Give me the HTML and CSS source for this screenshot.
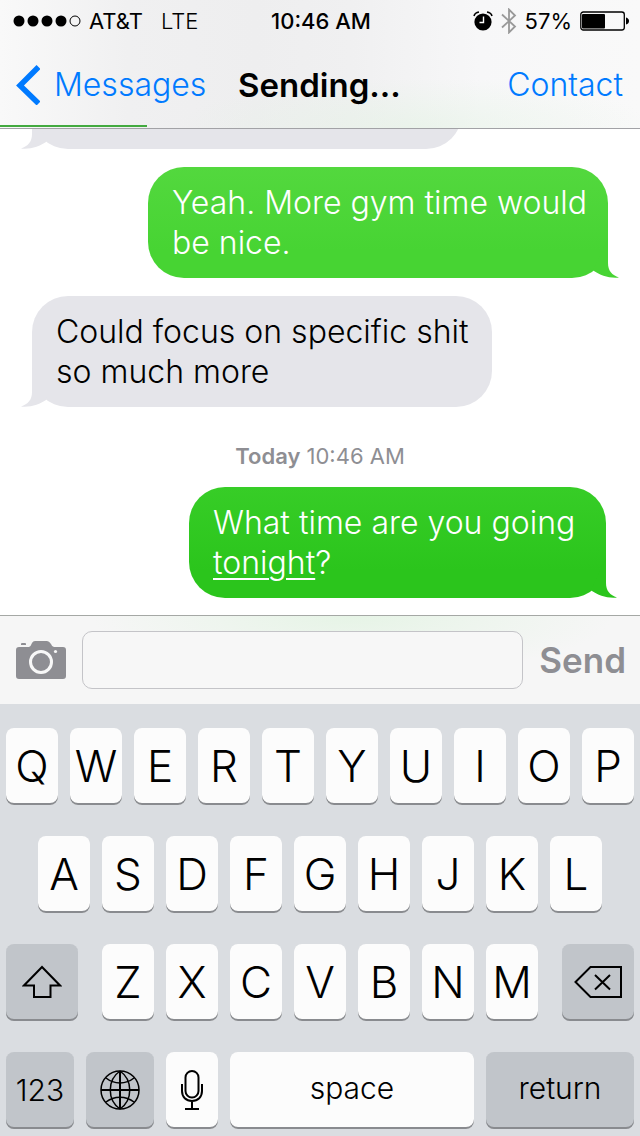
FILE: index.html
```html
<!DOCTYPE html>
<html lang="en">
<head>
    <meta charset="UTF-8">
    <meta name="viewport" content="width=device-width, initial-scale=1.0">
    <title>Messages</title>
    <link rel="stylesheet" href="styles.css">
</head>
<body>
    <header class="header">
        <div class="status">
            <div class="status-left">
                <svg class="signal" width="68" height="12" viewBox="0 0 68 12">
                    <circle cx="6" cy="6" r="5.5"/>
                    <circle cx="20" cy="6" r="5.5"/>
                    <circle cx="34" cy="6" r="5.5"/>
                    <circle cx="48" cy="6" r="5.5"/>
                    <circle cx="62" cy="6" r="5" fill="none" stroke="#000"/>
                </svg>
                <span class="carrier">AT&amp;T</span>
                <span class="network">LTE</span>
            </div>
            <div class="clock">10:46 AM</div>
            <div class="status-right">
                <svg width="20" height="20" viewBox="0 0 20 20">
                    <circle cx="10" cy="11" r="8.6"/>
                    <path d="M1 5 Q2 1.5 6 1M19 5 Q18 1.5 14 1" fill="none" stroke="#000" stroke-width="1.6"/>
                    <path d="M10.5 5.5V11.5H6.5" fill="none" stroke="#fff" stroke-width="1.4"/>
                </svg>
                <svg class="bluetooth" width="16" height="26" viewBox="0 0 16 26">
                    <path d="M1 6.5L14 18.5L8 24.5V1.5L14 7.5L1 19.5" fill="none" stroke="#999" stroke-width="1.8"/>
                </svg>
                <span class="percent">57%</span>
                <svg width="49" height="20" viewBox="0 0 49 20">
                    <rect x=".8" y="1" width="43.5" height="18" rx="2.5" fill="none" stroke="#000" stroke-width="1.3"/>
                    <rect x="2" y="3" width="23" height="14.5" rx="1"/>
                    <path d="M46 6.5Q49 7.5 49 10T46 13.5Z"/>
                </svg>
            </div>
        </div>
        <nav class="nav">
            <a href="#" class="back">
                <svg width="24" height="40" viewBox="0 0 24 40">
                    <path d="M22.500 2L4 20.500L22.500 38.500" fill="none" stroke="#007aff" stroke-width="5.500"/>
                </svg>
                Messages
            </a>
            <h1>Sending...</h1>
            <a href="#" class="contact">Contact</a>
        </nav>
        <progress class="progress" value="23" max="100" aria-label="Sending"></progress>
    </header>

    <main class="chat">
        <div class="bubble received previous">
            <svg class="tail" width="26" height="40" viewBox="0 0 26 40"><path d="M11 0V25C11 33 7 37 0 39.500C10 40.500 19 37 25 33L26 32Z"/></svg>
        </div>
        <div class="bubble sent">
            Yeah. More gym time would be nice.
            <svg class="tail" width="26" height="40" viewBox="0 0 26 40"><path d="M11 0V25C11 33 7 37 0 39.500C10 40.500 19 37 25 33L26 32Z"/></svg>
        </div>
        <div class="bubble received">
            Could focus on specific shit so much more
            <svg class="tail" width="26" height="40" viewBox="0 0 26 40"><path d="M11 0V25C11 33 7 37 0 39.500C10 40.500 19 37 25 33L26 32Z"/></svg>
        </div>
        <div class="date"><b>Today</b> 10:46 AM</div>
        <div class="bubble sent sending">
            What time are you going <u>tonight</u>?
            <svg class="tail" width="26" height="40" viewBox="0 0 26 40"><path d="M11 0V25C11 33 7 37 0 39.500C10 40.500 19 37 25 33L26 32Z"/></svg>
        </div>
    </main>

    <form class="composer">
        <button type="button" class="camera" aria-label="Camera">
            <svg width="50" height="38" viewBox="0 0 50 38">
                <path d="M3 6H13Q15 5 16 2Q17 0 19 0H31Q33 0 35 3Q36 6 38 6H47Q50 6 50 9V35Q50 38 47 38H3Q0 38 0 35V9Q0 6 3 6Z" fill="#8e8e93"/>
                <path d="M5 4V3Q5 2 6 2H9Q10 2 10 3V4Z" fill="#8e8e93"/>
                <circle cx="25" cy="21" r="10.500" fill="none" stroke="#f8f8f8" stroke-width="3"/>
                <circle cx="39.500" cy="10.500" r="1.600" fill="#f8f8f8"/>
            </svg>
        </button>
        <input type="text" class="message" aria-label="Message">
        <button type="submit" class="send" disabled>Send</button>
    </form>

    <div class="keyboard">
        <div class="row">
            <button>Q</button>
            <button>W</button>
            <button>E</button>
            <button>R</button>
            <button>T</button>
            <button>Y</button>
            <button>U</button>
            <button>I</button>
            <button>O</button>
            <button>P</button>
        </div>
        <div class="row row-middle">
            <button>A</button>
            <button>S</button>
            <button>D</button>
            <button>F</button>
            <button>G</button>
            <button>H</button>
            <button>J</button>
            <button>K</button>
            <button>L</button>
        </div>
        <div class="row row-shift">
            <button class="dark" aria-label="Shift">
                <svg width="40" height="34" viewBox="0 0 40 34">
                    <path d="M20 2L2 20.500H12V32H28.500V20.500H38Z" fill="none" stroke="#000" stroke-width="2"/>
                </svg>
            </button>
            <div class="letters">
                <button>Z</button>
                <button>X</button>
                <button>C</button>
                <button>V</button>
                <button>B</button>
                <button>N</button>
                <button>M</button>
            </div>
            <button class="dark" aria-label="Delete">
                <svg width="48" height="32" viewBox="0 0 48 32">
                    <path d="M1.500 16L16.500 1H47V31H16.500Z" fill="none" stroke="#000" stroke-width="2"/>
                    <path d="M21 9L36 23.500M36 9L21 23.500" fill="none" stroke="#000" stroke-width="2"/>
                </svg>
            </button>
        </div>
        <div class="row row-space">
            <button class="dark small">123</button>
            <button class="dark" aria-label="Next keyboard">
                <svg width="40" height="40" viewBox="0 0 40 40" fill="none" stroke="#000" stroke-width="1.500">
                    <circle cx="20" cy="20" r="19"/>
                    <path d="M20 1V39M1 20H39" stroke-width="2"/>
                    <path d="M20 1C7 10 7 30 20 39M20 1C33 10 33 30 20 39"/>
                    <path d="M6 8C14 14.500 26 14.500 34 8M6 32C14 25.500 26 25.500 34 32"/>
                </svg>
            </button>
            <button aria-label="Dictation">
                <svg width="24" height="40" viewBox="0 0 24 40" fill="none" stroke="#000" stroke-width="2">
                    <rect x="5.500" y="1" width="13" height="26.500" rx="6.500"/>
                    <path d="M2 14V21C2 27 6 31 12 31S22 27 22 21V14M12 31V39M5 39H19"/>
                </svg>
            </button>
            <button class="small word">space</button>
            <button class="dark small word">return</button>
        </div>
    </div>
</body>
</html>
```
FILE: styles.css
```css
* {
    box-sizing: border-box;
}
body {
    margin: 0;
    height: 100vh;
    display: flex;
    flex-direction: column;
    font-family: Inter, "Liberation Sans", sans-serif;
    font-weight: 300;
    font-size: 32px;
    color: #000;
    background-color: #fff;
}
button, input {
    font: inherit;
    color: inherit;
    margin: 0;
    padding: 0;
    border: none;
    background: none;
}
svg {
    display: block;
    flex: none;
}
a {
    color: #007aff;
    text-decoration: none;
}

/* Header */
.header {
    position: relative;
    border-bottom: 1px solid #a2a2a6;
    background:
        radial-gradient(ellipse 240px 50px at 65% 100%, rgba(225, 243, 225, 0.5), rgba(225, 243, 225, 0)),
        linear-gradient(to right, #f9f9f9, #f0f0f1 20%, #eeeeef 40%, #f0f0f1 55%, #f7f7f8 75%, #f9f9f9);
}
.status, .nav {
    display: grid;
    grid-template-columns: 1fr auto 1fr;
    align-items: center;
}
.status {
    height: 41px;
    padding: 0 11px 0 13px;
    font-size: 22px;
    font-weight: 400;
}
.status-left, .status-right {
    display: flex;
    align-items: center;
    gap: 8px;
}
.status-right {
    justify-content: flex-end;
}
.network {
    margin-left: 10px;
    font-weight: 300;
}
.clock {
    font-weight: 500;
}
.nav {
    height: 87px;
    padding: 0 17px 0 16px;
}
.back {
    display: flex;
    align-items: center;
    gap: 14px;
}
.nav h1 {
    margin: 0;
    font-size: 33px;
    font-weight: 600;
}
.contact {
    text-align: right;
}
.progress {
    position: absolute;
    left: 0;
    bottom: 1px;
    width: 100%;
    height: 2px;
    appearance: none;
    border: none;
    background: none;
}
.progress::-webkit-progress-bar {
    background: none;
}
.progress::-webkit-progress-value {
    background-color: #43aa40;
}

/* Conversation */
.chat {
    flex: 1 1 0;
    min-height: 0;
    overflow: hidden;
    display: flex;
    flex-direction: column;
    justify-content: flex-end;
    gap: 18px;
    padding: 0 32px 17px;
}
.bubble {
    position: relative;
    flex: none;
    max-width: 80%;
    width: 460px;
    min-height: 111px;
    padding: 16px 12px 15px 24px;
    border-radius: 36px;
    line-height: 40px;
}
.received {
    align-self: flex-start;
    background-color: #e5e5ea;
}
.sent {
    align-self: flex-end;
    color: #fff;
    background: linear-gradient(#53d83e, #47d433 75%);
}
.previous {
    width: 430px;
}
.sending {
    width: 417px;
    margin-right: 2px;
    background: linear-gradient(#37cd27, #2bc51c 75%);
}
.tail {
    position: absolute;
    bottom: 0;
    left: -11px;
    fill: #e5e5ea;
}
.sent .tail {
    left: auto;
    right: -11px;
    transform: scaleX(-1);
    fill: #47d433;
}
.sending .tail {
    fill: #2bc51c;
}
.bubble u {
    text-decoration-thickness: 2px;
    text-underline-offset: 4px;
}
.date {
    margin-top: 18px;
    text-align: center;
    font-size: 22px;
    line-height: 26px;
    font-weight: 400;
    color: #8e8e93;
}
.date b {
    font-weight: 600;
}

/* Message field */
.composer {
    display: flex;
    align-items: center;
    gap: 16px;
    height: 89px;
    padding: 0 14px 0 16px;
    border-top: 1px solid #a5a8a5;
    background: radial-gradient(ellipse 260px 60px at 55% 0, #e6f4e6, #f6f6f6);
}
.message {
    flex: 1;
    min-width: 0;
    height: 58px;
    padding: 0 16px;
    border: 1px solid #c4c4c8;
    border-radius: 10px;
    background-color: #f7f7f7;
}
.send {
    font-size: 35px;
    font-weight: 600;
    color: #8e8e93;
}

/* Keyboard */
.keyboard {
    display: flex;
    flex-direction: column;
    gap: 31px;
    padding: 24px 6px 7px;
    background-color: #dadde1;
}
.row, .letters {
    display: grid;
    grid-auto-flow: column;
    grid-auto-columns: 1fr;
    gap: 12px;
}
.row-middle {
    padding: 0 32px;
}
.row-shift {
    grid-template-columns: 72fr 436fr 72fr;
    gap: 24px;
}
.row-space {
    grid-template-columns: 68fr 68fr 52fr 244fr 148fr;
}
.keyboard button {
    display: flex;
    align-items: center;
    justify-content: center;
    height: 77px;
    padding-bottom: 1px;
    border-radius: 8px;
    font-size: 44px;
    background-color: #fcfcfc;
    box-shadow: inset 0 -2px 0 #898b8f;
}
.keyboard .dark {
    background-color: #c1c5ca;
}
.keyboard .small {
    font-size: 30px;
}
.keyboard .word {
    padding-bottom: 5px;
}
```
